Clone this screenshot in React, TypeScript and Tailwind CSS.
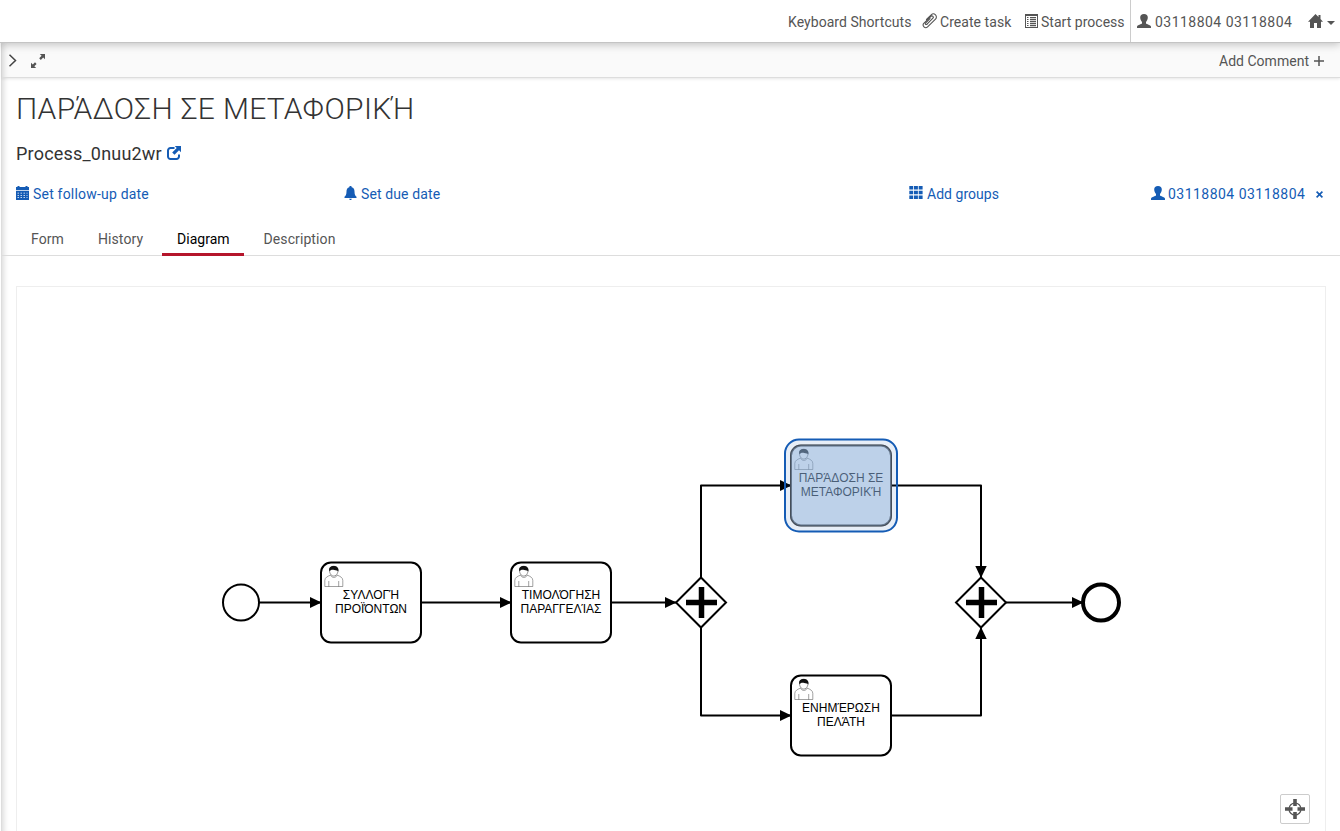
import React from 'react';

type IconProps = { className?: string };

function PaperclipIcon({ className }: IconProps) {
  return (
    <svg className={className} viewBox="0 0 16 16" fill="none" stroke="currentColor" strokeWidth="1.1" strokeLinecap="round">
      <path d="M4.800 11.300 10.900 5.200a1.300 1.300 0 0 0-1.900-1.900L2 10.200a2.500 2.500 0 0 0 3.600 3.700l7.900-7.800a3 3 0 0 0-4.300-4.300L4.500 6.500" />
      <path d="m4.800 11.300a.9.9 0 0 1-1.300-1.300L8 5.500" />
    </svg>
  );
}

function ListIcon({ className }: IconProps) {
  return (
    <svg className={className} viewBox="0 0 13 14" fill="currentColor">
      <path fillRule="evenodd" d="M0 0h13v14H0zM1 2v11h11V2z" />
      <path d="M2 3h1.5v1H2zM2 5h1.5v1H2zM2 7h1.5v1H2zM2 9h1.5v1H2zM2 11h1.5v1H2zM5 3h6v1.2H5zM5 5h6v1.2H5zM5 7h6v1.2H5zM5 9h6v1.2H5zM5 11h6v1.2H5z" />
    </svg>
  );
}

function UserIcon({ className }: IconProps) {
  return (
    <svg className={className} viewBox="0 0 14 14" fill="currentColor">
      <path d="M7 0c2.500 0 3.800 1.400 3.800 3.600 0 1.900-.9 3.500-1.800 4.400v1.400c.5.800 4.500 1.300 4.900 2.900.1.500.1 1.200.1 1.700H0c0-.5 0-1.200.1-1.700C.5 10.700 4.500 10.200 5 9.400V8C4.100 7.100 3.200 5.500 3.200 3.600 3.200 1.400 4.500 0 7 0z" />
    </svg>
  );
}

function HomeIcon({ className }: IconProps) {
  return (
    <svg className={className} viewBox="0 0 15 14" fill="currentColor">
      <path d="M7.500 0 10.500 3V1h2v4l2.500 2.700h-2V14H9V9H6v5H2V7.700H0z" />
    </svg>
  );
}

function ExpandIcon({ className }: IconProps) {
  return (
    <svg className={className} viewBox="0 0 14 14" fill="currentColor">
      <path d="M8.800 0H14v5.200l-1.800-1.700-2.400 2.400-1.600-1.600 2.400-2.500zM0 14V8.800l1.800 1.700 2.200-2.200 1.600 1.600-2.300 2.300L5.200 14z" />
    </svg>
  );
}

function ShareIcon({ className }: IconProps) {
  return (
    <svg className={className} viewBox="0 0 14 14">
      <path d="M7.500 2H3.500A2.500 2.500 0 0 0 1 4.500v6A2.500 2.500 0 0 0 3.500 13h6a2.500 2.500 0 0 0 2.500-2.500V8.500" fill="none" stroke="currentColor" strokeWidth="2" />
      <path d="M7.800 0H14v6.200l-2-1.900-4.500 4.500-2.300-2.300 4.500-4.500z" fill="currentColor" />
    </svg>
  );
}

function CalendarIcon({ className }: IconProps) {
  return (
    <svg className={className} viewBox="0 0 13 14" fill="currentColor">
      <path d="M0 1h1.500V0h2v1h6V0h2v1H13v3.200H0z" />
      <path fillRule="evenodd" d="M0 5h13v9H0zM1.500 6.700v.8h1.500v-.8zm3 0v.8h1.500v-.8zm3 0v.8H9v-.8zm3 0v.8h1v-.8zm-9 2.300v.8h1.500V9zm3 0v.8h1.500V9zm3 0v.8H9V9zm3 0v.8h1V9zm-9 2.300v.8h1.500v-.8zm3 0v.8h1.500v-.8zm3 0v.8H9v-.8zm3 0v.8h1v-.8z" />
    </svg>
  );
}

function BellIcon({ className }: IconProps) {
  return (
    <svg className={className} viewBox="0 0 12 14" fill="currentColor">
      <path d="M6 0c.8 0 1.200.500 1.200 1.300C9.200 1.900 10 3.400 10 5.400c0 2.900.8 4.400 2 5.400v1.200H0v-1.200c1.200-1 2-2.500 2-5.400 0-2 .8-3.500 2.800-4.100C4.800.5 5.200 0 6 0zM4.700 12.800h2.600c-.1.800-.6 1.200-1.300 1.200s-1.200-.4-1.300-1.200z" />
    </svg>
  );
}

function GridIcon({ className }: IconProps) {
  return (
    <svg className={className} viewBox="0 0 14 13" fill="currentColor">
      <path d="M.300 0h3.900v3.600H.300zM5 0h3.900v3.600H5zM9.700 0h3.900v3.600H9.700zM.300 4.800h3.900v3.500H.300zM5 4.800h3.900v3.500H5zM9.700 4.800h3.900v3.500H9.700zM.300 9.500h3.900V13H.300zM5 9.500h3.900V13H5zM9.700 9.500h3.900V13H9.700z" />
    </svg>
  );
}

function TargetIcon({ className }: IconProps) {
  return (
    <svg className={className} viewBox="0 0 20 20">
      <circle cx="10" cy="10" r="6" fill="none" stroke="currentColor" strokeWidth="1.200" />
      <path fill="currentColor" d="M8.200 0h3.600v7H8.200zM8.200 13h3.600v7H8.200zM0 8.200h7.500v3.600H0zM12.500 8.200H20v3.600h-7.500z" />
    </svg>
  );
}

type TaskProps = { x: number; y: number; lines: [string, string] };

function Task({ x, y, lines }: TaskProps) {
  return (
    <g transform={`translate(${x} ${y})`}>
      <rect width="100" height="80" rx="10" fill="white" stroke="black" strokeWidth="2" />
      <path d="M9.800 12.500c-3.200 1.400-5.800 2.300-6 5.300V24h18v-6.200c-.2-3-2.600-3.900-5.800-5.300-.3 3.200-5.900 3.200-6.200 0z" fill="white" stroke="#444" strokeWidth=".5" />
      <path d="M7.800 18.500V24M17.700 18.500V24" stroke="#444" strokeWidth=".5" />
      <path d="M8.500 8c0-2.600 1.500-4.300 4.200-4.300S17 5.400 17 8c0 2-.8 3.600-2 4.700-1.200 1.100-3.400 1.100-4.500 0C9.300 11.600 8.500 10 8.500 8z" fill="white" stroke="#333" strokeWidth=".5" />
      <path d="M8.400 8.800C7.300 5.300 9.600 3.500 12.700 3.500c3.200 0 5.500 1.900 4.600 5.600-.7-1.500-2.300-.8-4-1.500-1.800-.8-3.700-.4-4.900 1.200z" fill="#111" />
      <text x="50" y="36.500" textAnchor="middle" className="font-['Liberation_Sans',Arial,sans-serif] text-[12px]">{lines[0]}</text>
      <text x="50" y="50.500" textAnchor="middle" className="font-['Liberation_Sans',Arial,sans-serif] text-[12px]">{lines[1]}</text>
    </g>
  );
}

function Gateway({ x, y }: { x: number; y: number }) {
  return (
    <g transform={`translate(${x} ${y})`}>
      <path d="M0-25 25 0 0 25-25 0z" fill="white" stroke="black" strokeWidth="2" />
      <path d="M-15 0h31M.5-15.500v31" stroke="black" strokeWidth="5.500" />
    </g>
  );
}

const flows = [
  'M259 316.500H321',
  'M421 316.500H511',
  'M611 316.500H676',
  'M701 291.500V199.500H791',
  'M701 341.500V429.500H791',
  'M891 199.500H981V291.500',
  'M891 429.500H981V341.500',
  'M1006 316.500H1083',
];

function Diagram() {
  return (
    <svg className="block h-[545px] w-[1308px]" viewBox="17 1 1308 545">
      <defs>
        <marker id="arrow" viewBox="0 0 12 12" refX="11.500" refY="6" markerWidth="12" markerHeight="12" markerUnits="userSpaceOnUse" orient="auto">
          <path d="M0 .3 12 6 0 11.700z" />
        </marker>
      </defs>
      <circle cx="241" cy="316.500" r="18" fill="white" stroke="black" strokeWidth="2" />
      <Task x={321} y={276.5} lines={['ΣΥΛΛΟΓΉ', 'ΠΡΟΪΌΝΤΩΝ']} />
      <Task x={511} y={276.5} lines={['ΤΙΜΟΛΌΓΗΣΗ', 'ΠΑΡΑΓΓΕΛΊΑΣ']} />
      <Gateway x={701} y={316.5} />
      <Task x={791} y={159.5} lines={['ΠΑΡΆΔΟΣΗ ΣΕ', 'ΜΕΤΑΦΟΡΙΚΉ']} />
      <Task x={791} y={389.5} lines={['ΕΝΗΜΈΡΩΣΗ', 'ΠΕΛΆΤΗ']} />
      <Gateway x={981} y={316.5} />
      <circle cx="1101" cy="316.500" r="18" fill="white" stroke="black" strokeWidth="4" />
      {flows.map((d) => (
        <path key={d} d={d} fill="none" stroke="black" strokeWidth="2" strokeLinejoin="round" markerEnd="url(#arrow)" />
      ))}
      <rect x="790" y="158.500" width="102" height="82" rx="11" fill="#c5d7ee" fillOpacity=".2" />
      <rect x="791" y="159.500" width="100" height="80" rx="10" fill="#155cb5" fillOpacity=".17" />
      <rect x="785" y="153.500" width="112" height="92" rx="14" fill="#155cb5" fillOpacity=".1" />
      <rect x="791" y="159.500" width="100" height="80" rx="10" fill="#c4d6ed" fillOpacity=".25" stroke="white" strokeWidth="2" strokeOpacity=".15" />
      <rect x="785" y="153.500" width="112" height="92" rx="14" fill="none" stroke="#155cb5" strokeWidth="2" />
    </svg>
  );
}

export default function App() {
  return (
    <div className="flex h-[831px] w-[1340px] flex-col overflow-hidden bg-white font-[Roboto,'Noto_Sans',sans-serif] text-[14px] leading-5 text-[#555]">
      <header className="z-10 flex h-[43px] shrink-0 justify-end border-b border-[#c4c4c4] bg-white shadow-[0_2px_8px_rgba(0,0,0,0.22)]">
        <div className="flex items-start pt-3">
          <span className="w-[134px] tracking-[0.05px]">Keyboard Shortcuts</span>
          <PaperclipIcon className="mt-[1px] mr-[2px] size-4" />
          <span className="w-[85px] tracking-[0.05px]">Create task</span>
          <ListIcon className="mt-[2px] mr-[3px] h-[14px] w-[13px]" />
          <span className="w-[89px] tracking-[0.02px]">Start process</span>
        </div>
        <div className="flex items-start border-l border-[#ccc] pt-3 pl-[6px]">
          <UserIcon className="mt-[2px] mr-[4px] size-[14px]" />
          <span className="w-[153px] tracking-[0.47px]">03118804 03118804</span>
          <HomeIcon className="mt-[2px] mr-[4px] h-[14px] w-[15px]" />
          <span className="mt-[9px] mr-[5px] h-0 w-0 border-x-4 border-t-4 border-x-transparent border-t-[#555]" />
        </div>
      </header>
      <main className="ml-px flex min-h-0 flex-1 flex-col border-l border-[#ddd] shadow-[inset_7px_0_6px_-6px_rgba(0,0,0,0.18)]">
        <div className="flex h-[35px] shrink-0 items-center border-b border-[#ddd] bg-[#fafafa] pl-[6px] shadow-[inset_7px_0_6px_-6px_rgba(0,0,0,0.18),0_1px_3px_rgba(0,0,0,0.1)]">
          <svg className="mt-px h-[13px] w-[10px]" viewBox="0 0 10 13" fill="none" stroke="#444" strokeWidth="1.500">
            <path d="m1.500.700 6 5.800-6 5.800" />
          </svg>
          <ExpandIcon className="mt-px ml-[13px] size-[14px]" />
          <span className="mt-[2px] ml-auto w-[95px] tracking-[0.02px]">Add Comment</span>
          <svg className="mt-px mr-[16px] size-[10px]" viewBox="0 0 10 10" stroke="#555" strokeWidth="1.500">
            <path d="M5 0v10M0 5h10" />
          </svg>
        </div>
        <h1 className="mt-[13px] ml-[14px] h-9 text-[30px] leading-9 font-light tracking-[0.37px] text-[#333]">ΠΑΡΆΔΟΣΗ ΣΕ ΜΕΤΑΦΟΡΙΚΉ</h1>
        <div className="mt-[15px] ml-[14px] flex h-6 items-center text-[18px] text-[#333]">
          <span className="w-[151px] tracking-[0.2px]">Process_0nuu2wr</span>
          <ShareIcon className="mb-[2px] size-[14px] text-[#155cb5]" />
        </div>
        <div className="mt-[18px] ml-[14px] flex h-5 items-center text-[#155cb5]">
          <div className="flex w-[328px] items-center">
            <CalendarIcon className="mr-[4px] mb-[2px] h-[14px] w-[13px]" />
            <span className="tracking-[0.2px]">Set follow-up date</span>
          </div>
          <div className="flex w-[565px] items-center">
            <BellIcon className="mr-[4px] mb-[2px] h-[14px] w-[13px]" />
            <span className="tracking-[0.12px]">Set due date</span>
          </div>
          <div className="flex w-[242px] items-center">
            <GridIcon className="mr-[4px] mb-[3px] h-[13px] w-[14px]" />
            <span className="tracking-[0.03px]">Add groups</span>
          </div>
          <UserIcon className="mr-[3px] mb-[2px] size-[14px]" />
          <span className="w-[148px] tracking-[0.47px]">03118804 03118804</span>
          <svg className="size-[7px]" viewBox="0 0 6 6" stroke="currentColor" strokeWidth="1.400">
            <path d="m.500.500 5 5m0-5-5 5" />
          </svg>
        </div>
        <nav className="mt-[20px] flex h-[32px] shrink-0 border-b border-[#ddd] pl-[14px]">
          <span className="w-[67px] pt-[5px] pl-[15px] tracking-[0.1px]">Form</span>
          <span className="w-[79px] pt-[5px] pl-[15px] tracking-[0.08px]">History</span>
          <span className="h-[32px] w-[82px] border-b-[3px] border-[#b5152b] pt-[5px] pl-[15px] tracking-[0.02px] text-black">Diagram</span>
          <span className="ml-1 pt-[5px] pl-[15.500px] tracking-[0.1px]">Description</span>
        </nav>
        <section className="relative mt-[30px] ml-[14px] h-[545px] w-[1310px] shrink-0 border border-b-0 border-[#eee]">
          <Diagram />
          <button className="absolute right-[15px] bottom-[7px] flex size-[30px] items-center justify-center rounded-[2px] border border-[#ccc] bg-white">
            <TargetIcon className="size-5" />
          </button>
        </section>
      </main>
    </div>
  );
}
